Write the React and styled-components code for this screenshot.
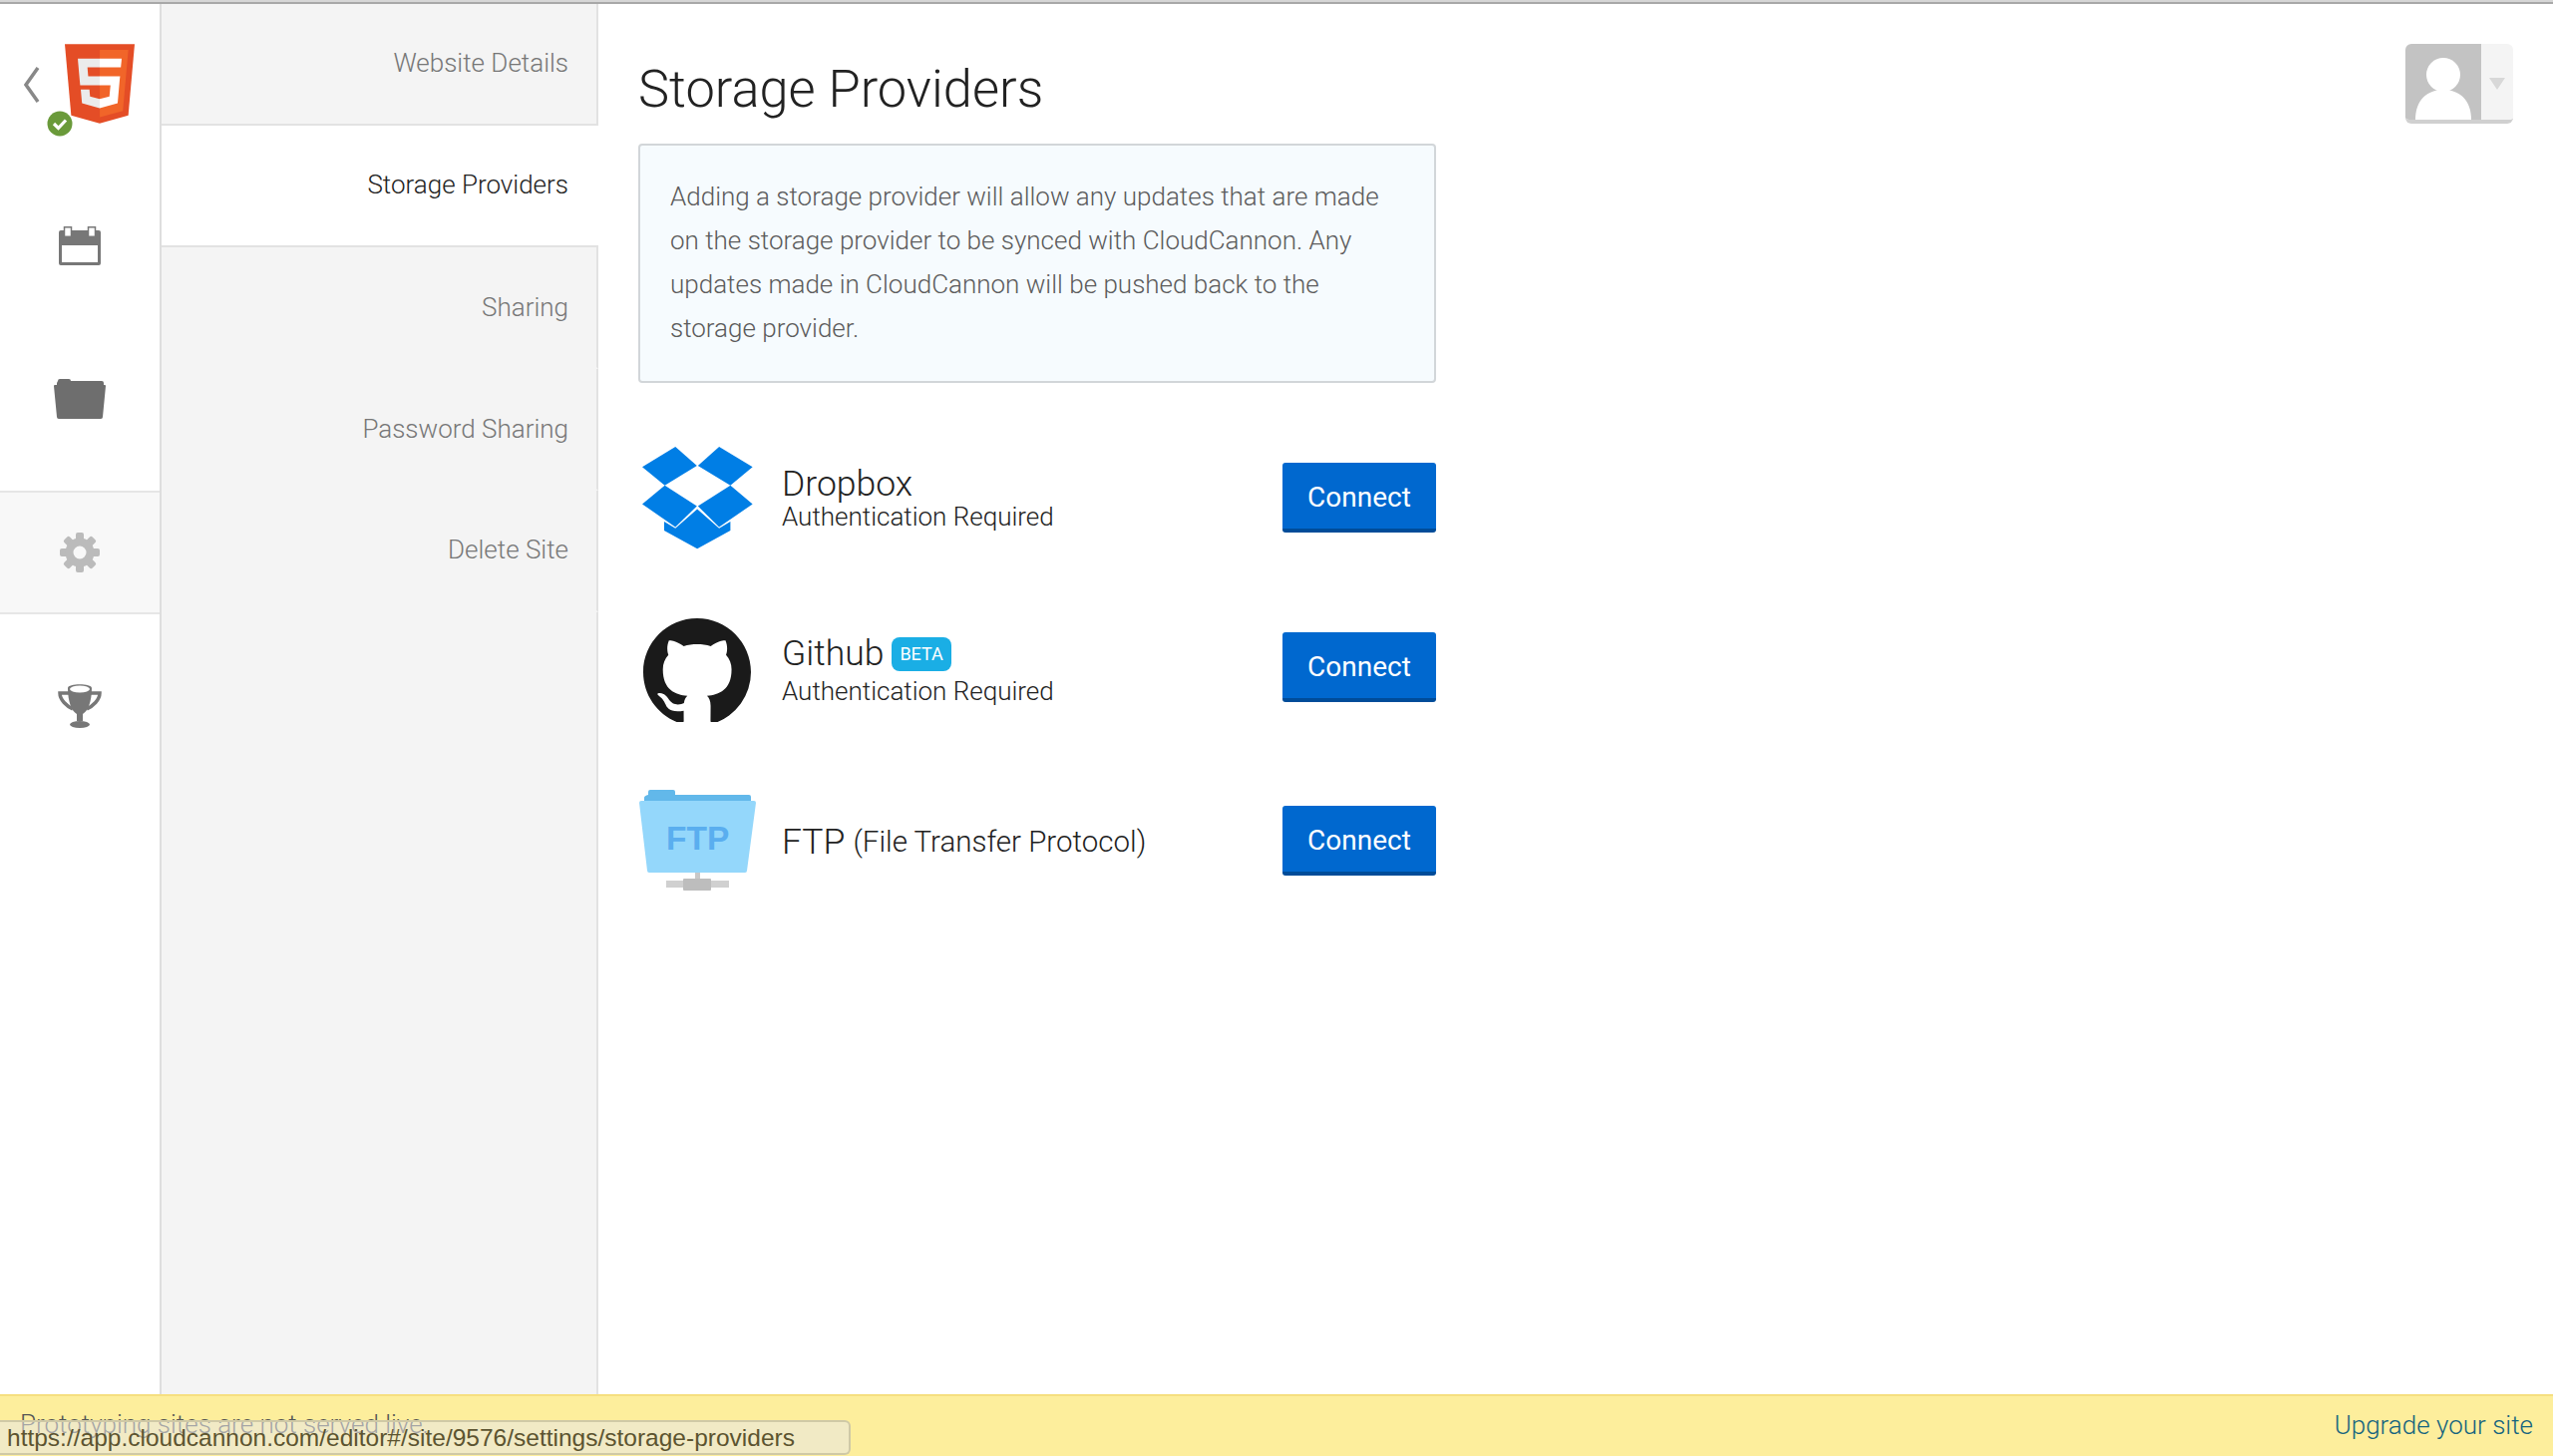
import styled, { createGlobalStyle } from "styled-components";

const Global = createGlobalStyle`
    html, body {
        margin: 0;
        padding: 0;
        background: #fff;
    }
    body {
        font-family: Roboto, "Liberation Sans", sans-serif;
        font-weight: 300;
    }
`

const Page = styled.div`
    width: 2560px;
    height: 1460px;
    display: flex;
    flex-direction: column;
    overflow: hidden;
    position: relative;
`
const TopLine = styled.div`
    height: 2px;
    flex: none;
    background: #d6d6d6;
    border-bottom: 2px solid #a8a8a8;
`
const Body = styled.div`
    flex: 1;
    display: flex;
    min-height: 0;
`
const Rail = styled.nav`
    width: 160px;
    flex: none;
    border-right: 2px solid #dedede;
    display: flex;
    flex-direction: column;
    gap: 30px;
`
const RailHead = styled.div`
    height: 150px;
    padding: 40px 0 0 24px;
    display: flex;
    box-sizing: border-box;
    position: relative;
`
const Back = styled.svg`
    width: 16px;
    height: 38px;
    margin-top: 22px;
    margin-right: 25px;
`
const Badge = styled.svg`
    position: absolute;
    left: 47px;
    top: 107px;
    width: 26px;
    height: 26px;
`
const RailItem = styled.div`
    height: 124px;
    box-sizing: border-box;
    display: flex;
    align-items: center;
    justify-content: center;
    background: ${p => p.$active ? "#f8f8f8" : "transparent"};
    border-top: 2px solid ${p => p.$active ? "#e6e6e6" : "transparent"};
    border-bottom: 2px solid ${p => p.$active ? "#e6e6e6" : "transparent"};
`
const Menu = styled.div`
    width: 438px;
    flex: none;
    display: flex;
    flex-direction: column;
`
const MenuItem = styled.div`
    height: ${p => p.$h || 122}px;
    box-sizing: border-box;
    padding-right: 28px;
    padding-bottom: ${p => p.$lift || 0}px;
    display: flex;
    align-items: center;
    justify-content: flex-end;
    font-size: 26px;
    color: ${p => p.$active ? "#222" : "#777"};
    background: ${p => p.$active ? "#fff" : "#f4f4f4"};
    border-right: 2px solid ${p => p.$active ? "transparent" : "#e2e2e2"};
    border-bottom: 2px solid ${p => p.$line ? "#e2e2e2" : "transparent"};
`
const MenuFill = styled.div`
    flex: 1;
    background: #f4f4f4;
    border-right: 2px solid #e2e2e2;
`
const Main = styled.main`
    flex: 1;
    display: flex;
    justify-content: space-between;
    padding: 0 40px 0 40px;
`
const Column = styled.div`
    width: 800px;
    display: flex;
    flex-direction: column;
`
const Title = styled.h1`
    margin: 52px 0 0;
    height: 88px;
    font-size: 52.4px;
    line-height: 66px;
    font-weight: 300;
    color: #222;
`
const Notice = styled.div`
    height: 240px;
    box-sizing: border-box;
    padding: 29px 30px;
    background: #f6fbfe;
    border: 2px solid #d2d6d9;
    border-radius: 4px;
    font-size: 26px;
    line-height: 44px;
    color: #5c5c5c;
`
const Row = styled.div`
    height: 110px;
    margin-top: ${p => p.$top}px;
    display: flex;
    align-items: center;
`
const Logo = styled.div`
    width: 144px;
    flex: none;
    display: flex;
    align-items: center;
    padding-left: ${p => p.$left || 0}px;
    padding-top: ${p => p.$down || 0}px;
    box-sizing: border-box;
`
const Info = styled.div`
    flex: 1;
    color: #222;
    padding-top: ${p => p.$down || 0}px;
    padding-bottom: ${p => p.$up || 0}px;
`
const Name = styled.div`
    font-size: 35.5px;
    line-height: 42px;
    display: flex;
    align-items: center;
    gap: 8px;
    margin-bottom: ${p => p.$after || 0}px;
`
const NameNote = styled.span`
    font-size: 29.5px;
`
const Sub = styled.div`
    font-size: 26px;
    line-height: 28px;
`
const Beta = styled.span`
    height: 34px;
    padding: 0 8px;
    border-radius: 8px;
    background: #1aaee5;
    color: #fff;
    font-size: 18px;
    font-weight: 400;
    line-height: 34px;
    margin-top: 2px;
`
const Connect = styled.button`
    width: 154px;
    height: 70px;
    box-sizing: border-box;
    border: 0;
    border-bottom: 4px solid #004c99;
    border-radius: 3px;
    background: #0068cf;
    color: #fff;
    font-family: Roboto, sans-serif;
    font-size: 28px;
    font-weight: 400;
    padding: 2px 0 0;
`
const Avatar = styled.div`
    width: 108px;
    height: 80px;
    margin-top: 40px;
    display: flex;
    box-sizing: border-box;
    border-bottom: 4px solid #d0d0d0;
    border-radius: 6px;
    overflow: hidden;
`
const AvatarPic = styled.svg`
    width: 76px;
    height: 76px;
    background: #c3c3c3;
`
const AvatarCaret = styled.div`
    flex: 1;
    background: #f4f4f4;
    display: flex;
    align-items: center;
    justify-content: center;
    &::after {
        content: "";
        margin-top: 4px;
        border-left: 8px solid transparent;
        border-right: 8px solid transparent;
        border-top: 12px solid #d8d8d8;
    }
`
const Footer = styled.footer`
    height: 62px;
    flex: none;
    box-sizing: border-box;
    background: #fdee9c;
    border-top: 2px solid #f6df80;
    padding: 0 20px 2px;
    display: flex;
    align-items: center;
    justify-content: space-between;
    font-size: 26px;
`
const FooterNote = styled.span`
    color: #555;
    margin-top: -3px;
`
const Upgrade = styled.span`
    color: #16657f;
`
const StatusTip = styled.div`
    position: absolute;
    left: 0;
    bottom: 1px;
    width: 853px;
    height: 35px;
    box-sizing: border-box;
    padding-left: 7px;
    background: rgba(232, 232, 232, 0.55);
    border: 2px solid #cfc9a6;
    border-left: 0;
    border-radius: 0 6px 6px 0;
    font-family: "Liberation Sans", Arial, sans-serif;
    font-weight: 400;
    font-size: 24.5px;
    line-height: 31px;
    color: #5c5430;
    white-space: nowrap;
`

const gearTeeth = [0, 45, 90, 135, 180, 225, 270, 315];

function Html5Logo() {
    return (
        <svg width="70" height="80" viewBox="30 0 451 512">
            <path fill="#E44D26" d="M71 460 30 0h451l-41 460-185 52z" />
            <path fill="#F16529" d="M256 472l149-41 35-394H256z" />
            <path fill="#EBEBEB" d="M256 208h-75l-5-58h80V94H114l1 15 14 156h127zM256 355h-1l-62-17-4-45h-56l8 89 114 32h1z" />
            <path fill="#fff" d="M255 208v57h70l-7 73-63 17v59l116-32 1-10 13-149 2-15zM255 94v56h137l1-13 3-28 1-15z" />
        </svg>
    );
}

function DropboxLogo() {
    return (
        <svg width="111" height="103" viewBox="72 84 334 310">
            <g fill="#007ee5">
                <polygon points="172,84 237,141 140,201 72,145" />
                <polygon points="304,84 405,145 338,201 240,141" />
                <polygon points="72,257 140,201 237,263 172,326" />
                <polygon points="338,201 405,257 304,326 240,263" />
                <polygon points="238,272 304,330 338,310 338,337 238,392 138,337 138,310 172,330" />
            </g>
        </svg>
    );
}

function GithubLogo() {
    return (
        <svg width="108" height="104" viewBox="0 0 16 15.4">
            <path fill="#1a1a1a" d="M8 0C3.58 0 0 3.58 0 8c0 3.54 2.29 6.53 5.47 7.59.4.07.55-.17.55-.38 0-.19-.01-.82-.01-1.49-2.01.37-2.53-.49-2.69-.94-.09-.23-.48-.94-.82-1.13-.28-.15-.68-.52-.01-.53.63-.01 1.08.58 1.23.82.72 1.21 1.87.87 2.33.66.07-.52.28-.87.51-1.07-1.78-.2-3.64-.89-3.64-3.95 0-.87.31-1.59.82-2.15-.08-.2-.36-1.02.08-2.12 0 0 .67-.21 2.2.82.64-.18 1.32-.27 2-.27.68 0 1.36.09 2 .27 1.53-1.04 2.2-.82 2.2-.82.44 1.1.16 1.92.08 2.12.51.56.82 1.27.82 2.15 0 3.07-1.87 3.75-3.65 3.95.29.25.54.73.54 1.48 0 1.07-.01 1.93-.01 2.2 0 .21.15.46.55.38A8.013 8.013 0 0016 8c0-4.42-3.58-8-8-8z" />
        </svg>
    );
}

function FtpLogo() {
    return (
        <svg width="117" height="102" viewBox="21 52 117 102">
            <path fill="#62b8ea" d="M30 54q0-2 2-2h23q2 0 2 2v3h74q2 0 2 2v5H26v-4q0-2 4-3z" />
            <path fill="#94d7fb" d="M23 63h113q2 0 2 2l-9 68q0 2-2 2H31q-2 0-2-2l-8-68q0-2 2-2z" />
            <text x="48" y="112" fontFamily="Liberation Sans" fontWeight="700" fontSize="33.5" fill="#5aaeef">FTP</text>
            <rect x="77" y="135" width="5" height="8" fill="#c8c8c8" />
            <rect x="48" y="143" width="63" height="7" fill="#d0d0d0" />
            <rect x="65" y="141" width="28" height="12" rx="1" fill="#bdbdbd" />
        </svg>
    );
}

function App() {
    return (
        <Page>
            <Global />
            <TopLine />
            <Body>
                <Rail>
                    <RailHead>
                        <Back viewBox="0 0 16 38">
                            <path d="M14 2 2 19l12 17" fill="none" stroke="#888" strokeWidth="3.5" />
                        </Back>
                        <Html5Logo />
                        <Badge viewBox="0 0 26 26">
                            <circle cx="13" cy="13" r="12.5" fill="#6a9a3a" />
                            <path d="M7 13l4.5 4.5L19 9.5" fill="none" stroke="#fff" strokeWidth="3.2" />
                        </Badge>
                    </RailHead>
                    <RailItem>
                        <svg width="42" height="39" viewBox="0 0 42 39">
                            <rect y="4" width="42" height="35" rx="2" fill="#777" />
                            <rect x="3" y="19" width="36" height="17" fill="#fff" />
                            <rect x="5.5" y=".8" width="7" height="9.5" fill="#fff" stroke="#777" strokeWidth="1.5" />
                            <rect x="29.5" y=".8" width="7" height="9.5" fill="#fff" stroke="#777" strokeWidth="1.5" />
                        </svg>
                    </RailItem>
                    <RailItem>
                        <svg width="52" height="40" viewBox="0 0 52 40">
                            <path fill="#6e6e6e" d="M4 2q0-2 2-2h9q2 0 2 2h31q2 0 2 2v2H3V4z" />
                            <path fill="#6e6e6e" d="M1 6h50q1 0 1 1l-3 31q0 2-2 2H5q-2 0-2-2L0 7q0-1 1-1z" />
                        </svg>
                    </RailItem>
                    <RailItem $active>
                        <svg width="40" height="40" viewBox="0 0 40 40">
                            {gearTeeth.map(a => (
                                <rect key={a} x="16" y="0" width="8" height="10" rx="2" fill="#bbb" transform={`rotate(${a} 20 20)`} />
                            ))}
                            <circle cx="20" cy="20" r="10.5" fill="none" stroke="#bbb" strokeWidth="8" />
                        </svg>
                    </RailItem>
                    <RailItem>
                        <svg width="44" height="44" viewBox="0 0 44 44">
                            <path d="M11 9H2c0 7 7 13 13 16M33 9h9c0 7-7 13-13 16" fill="none" stroke="#777" strokeWidth="3.5" />
                            <path fill="#777" d="M10 4c0-5 24-5 24 0 0 14-4 23-9 26v7h-6v-7c-5-3-9-12-9-26z" />
                            <ellipse cx="22" cy="5" rx="10" ry="3.5" fill="#fff" />
                            <ellipse cx="22" cy="40.5" rx="10" ry="3.5" fill="#777" />
                        </svg>
                    </RailItem>
                </Rail>
                <Menu>
                    <MenuItem $h={122} $lift={3} $line>Website Details</MenuItem>
                    <MenuItem $h={120} $active>Storage Providers</MenuItem>
                    <MenuItem $h={2} $line />
                    <MenuItem>Sharing</MenuItem>
                    <MenuItem>Password Sharing</MenuItem>
                    <MenuItem $lift={2}>Delete Site</MenuItem>
                    <MenuFill />
                </Menu>
                <Main>
                    <Column>
                        <Title>Storage Providers</Title>
                        <Notice>
                            Adding a storage provider will allow any updates that are made on the storage provider to be synced with CloudCannon. Any updates made in CloudCannon will be pushed back to the storage provider.
                        </Notice>
                        <Row $top={60}>
                            <Logo $left={4}><DropboxLogo /></Logo>
                            <Info $up={2}>
                                <Name $after={-2}>Dropbox</Name>
                                <Sub>Authentication Required</Sub>
                            </Info>
                            <Connect>Connect</Connect>
                        </Row>
                        <Row $top={60}>
                            <Logo $left={5} $down={6}><GithubLogo /></Logo>
                            <Info $down={3}>
                                <Name $after={3}>Github <Beta>BETA</Beta></Name>
                                <Sub>Authentication Required</Sub>
                            </Info>
                            <Connect>Connect</Connect>
                        </Row>
                        <Row $top={64}>
                            <Logo $left={1}><FtpLogo /></Logo>
                            <Info $down={2}>
                                <Name>FTP <NameNote>(File Transfer Protocol)</NameNote></Name>
                            </Info>
                            <Connect>Connect</Connect>
                        </Row>
                    </Column>
                    <Avatar>
                        <AvatarPic viewBox="0 0 76 76">
                            <circle cx="38" cy="31" r="17" fill="#fff" />
                            <path fill="#fff" d="M10 76c0-20 12-30 28-30s28 10 28 30z" />
                        </AvatarPic>
                        <AvatarCaret />
                    </Avatar>
                </Main>
            </Body>
            <Footer>
                <FooterNote>Prototyping sites are not served live.</FooterNote>
                <Upgrade>Upgrade your site</Upgrade>
            </Footer>
            <StatusTip>https://app.cloudcannon.com/editor#/site/9576/settings/storage-providers</StatusTip>
        </Page>
    );
}

export default App;
